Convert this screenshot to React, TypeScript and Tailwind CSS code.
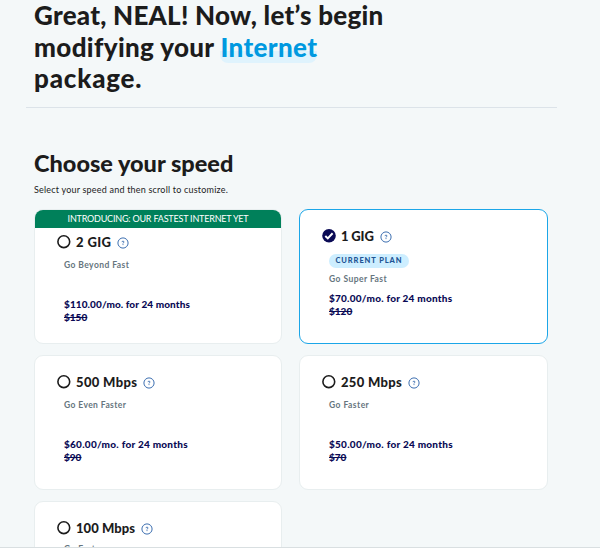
import clsx from 'clsx'

type Plan = {
  name: string
  nameTracking: string
  tagline: string
  taglineTracking: string
  price?: string
  priceTracking?: string
  oldPrice?: string
  banner?: string
  current?: boolean
}

const plans: Plan[] = [
  {
    name: '2 GIG',
    nameTracking: 'tracking-[0.4px]',
    tagline: 'Go Beyond Fast',
    taglineTracking: 'tracking-[0.42px]',
    price: '$110.00/mo. for 24 months',
    priceTracking: 'tracking-[0.1px]',
    oldPrice: '$150',
    banner: 'INTRODUCING: OUR FASTEST INTERNET YET',
  },
  {
    name: '1 GIG',
    nameTracking: 'tracking-[-0.15px]',
    tagline: 'Go Super Fast',
    taglineTracking: 'tracking-[0.45px]',
    price: '$70.00/mo. for 24 months',
    priceTracking: 'tracking-[0.24px]',
    oldPrice: '$120',
    current: true,
  },
  {
    name: '500 Mbps',
    nameTracking: 'tracking-[0.35px]',
    tagline: 'Go Even Faster',
    taglineTracking: 'tracking-[0.4px]',
    price: '$60.00/mo. for 24 months',
    priceTracking: 'tracking-[0.26px]',
    oldPrice: '$90',
  },
  {
    name: '250 Mbps',
    nameTracking: 'tracking-[0.3px]',
    tagline: 'Go Faster',
    taglineTracking: 'tracking-[0.45px]',
    price: '$50.00/mo. for 24 months',
    priceTracking: 'tracking-[0.26px]',
    oldPrice: '$70',
  },
  {
    name: '100 Mbps',
    nameTracking: 'tracking-[0.05px]',
    tagline: 'Go Fast',
    taglineTracking: 'tracking-[0.4px]',
  },
]

function Radio({ checked }: { checked?: boolean }) {
  if (checked) {
    return (
      <svg className="h-3.5 w-3.5 shrink-0" viewBox="0 0 14 14" fill="none">
        <circle cx="7" cy="6.8" r="6.8" fill="#0a0a55" />
        <path d="M3.3 7 5.8 9.4l4.8-5.1" stroke="#fff" strokeWidth="2" />
      </svg>
    )
  }
  return (
    <svg className="h-3.5 w-3.5 shrink-0" viewBox="0 0 14 14" fill="none">
      <circle cx="6.8" cy="6.7" r="5.9" stroke="#1c1c1c" strokeWidth="1.6" />
    </svg>
  )
}

function HelpIcon() {
  return (
    <svg className="mt-px h-3 w-3 shrink-0" viewBox="0 0 12 12" fill="none" stroke="#3d6fb0">
      <circle cx="6" cy="6" r="5.1" strokeWidth="1" />
      <path d="M5 5.1c0-.6.4-1 1-1s1 .4 1 .9c0 .7-1 .8-1 1.5" strokeWidth="0.95" />
      <path d="M6 7.2v.9" strokeWidth="1" />
    </svg>
  )
}

function PlanCard({ plan }: { plan: Plan }) {
  return (
    <div
      className={clsx(
        'h-[135px] overflow-hidden rounded-[9px] border bg-white',
        plan.current ? 'border-[#1ba6e8]' : 'border-[#e8eeef]',
      )}
    >
      {plan.banner && (
        <div className="h-[18px] bg-[#00805a] text-center text-[9px] leading-[17px] tracking-[-0.2px] text-white">
          {plan.banner}
        </div>
      )}
      <div className={clsx('pl-[22px]', plan.banner ? 'pt-[7px]' : 'pt-[19px]')}>
        <div className="flex h-3.5 items-center">
          <Radio checked={plan.current} />
          <h3 className={clsx('ml-[5px] text-[13px] leading-[14px] font-black whitespace-nowrap text-[#1c1c1c]', plan.nameTracking)}>
            {plan.name}
          </h3>
          <span className="ml-1.5">
            <HelpIcon />
          </span>
        </div>
        <div className="pl-[7px]">
          {plan.current && (
            <div className="mt-[11px] flex h-3.5 w-20 items-center justify-center rounded-full bg-[#cdeeff] text-[7.5px] font-black tracking-[0.9px] text-[#1f5595]">
              CURRENT PLAN
            </div>
          )}
          <p
            className={clsx(
              'h-3 text-[8.5px] leading-3 font-bold whitespace-nowrap text-[#66757e]',
              plan.current ? 'mt-[5px]' : plan.price ? 'mt-2.5' : 'mt-2',
              plan.taglineTracking,
            )}
          >
            {plan.tagline}
          </p>
          {plan.price && (
            <div
              className={clsx(
                'text-[10px] leading-[12.5px] font-black text-[#0a0a55]',
                plan.current ? 'mt-[7px]' : 'mt-[27px]',
              )}
            >
              <p className={plan.priceTracking}>{plan.price}</p>
              <p>
                <s>{plan.oldPrice}</s>
              </p>
            </div>
          )}
        </div>
      </div>
    </div>
  )
}

export default function App() {
  return (
    <div className="h-[557px] overflow-hidden bg-white font-['Lato',sans-serif] text-[#1c1c1c]">
      <main className="h-[548px] overflow-hidden border-b border-[#d9dfe1] bg-[#f4f8f9]">
        <header className="ml-[26px] w-[531px] border-b border-[#dce3e9] pl-2">
          <h1 className="h-[107px] text-[26px] leading-[31.6px] font-black whitespace-nowrap">
            <span className="block tracking-[0.25px]">Great, NEAL! Now, let’s begin</span>
            <span className="block tracking-[0.35px]">
              modifying your{' '}
              <span className="rounded-lg bg-[linear-gradient(transparent_62%,#dff3fd_62%)] text-[#0099e0]">Internet</span>
            </span>
            <span className="block tracking-[0.8px]">package.</span>
          </h1>
        </header>
        <section className="pt-[39px] pl-[34px]">
          <h2 className="h-8 text-[23.5px] leading-8 font-black">Choose your speed</h2>
          <p className="mt-[5px] h-3 text-[9px] leading-3 tracking-[0.2px]">Select your speed and then scroll to customize.</p>
          <div className="mt-[13px] grid grid-cols-[248px_249px] gap-x-[17px] gap-y-[11px]">
            {plans.map((plan) => (
              <PlanCard key={plan.name} plan={plan} />
            ))}
          </div>
        </section>
      </main>
    </div>
  )
}
